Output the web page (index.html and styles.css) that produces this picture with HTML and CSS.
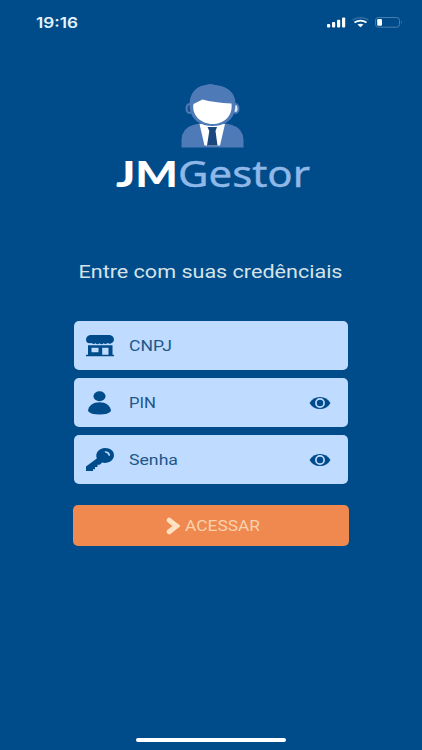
FILE: index.html
```html
<!DOCTYPE html>
<html lang="pt-BR">
<head>
<meta charset="utf-8">
<meta name="viewport" content="width=device-width, initial-scale=1">
<title>JMGestor</title>
<link rel="stylesheet" href="styles.css">
</head>
<body>
<div class="screen">
  <header class="status">
    <svg class="clock" width="44" height="16"><text x="0" y="12.500" textLength="42" lengthAdjust="spacingAndGlyphs">19:16</text></svg>
    <svg class="indicators" width="78" height="16" viewBox="0 0 78 16">
      <g fill="#fff">
        <rect x="1" y="9" width="3.200" height="3.500" rx="1"/>
        <rect x="6" y="7" width="3.200" height="5.500" rx="1"/>
        <rect x="11" y="4.800" width="3.200" height="7.700" rx="1"/>
        <rect x="16" y="2.400" width="3.200" height="10.100" rx="1"/>
        <path d="M31.500 9.600Q34.500 7.700 37.500 9.600L34.500 12.200Z"/>
      </g>
      <path d="M28.500 7.500Q34.500 3.800 40.500 7.500" fill="none" stroke="#fff" stroke-width="1.800"/>
      <path d="M26.600 5Q34.500 .6 42.400 5" fill="none" stroke="#2d6ca2" stroke-width="1.500"/>
      <rect x="49.500" y="2.500" width="24" height="9.700" rx="2.800" fill="none" stroke="#477eae"/>
      <path d="M75 5.500q1.800 1.800 0 3.600z" fill="#477eae"/>
      <rect x="51.200" y="4" width="4.800" height="6.800" rx="1.200" fill="#fff"/>
    </svg>
  </header>

  <div class="brand">
    <svg width="64" height="66" viewBox="0 0 64 66">
      <path d="M.5 64.500V57Q1 45 12 42L20 40H43L51 42Q62 45 62.500 57V64.500Z" fill="#4e7bb8"/>
      <path d="M18.500 41H44L39 62.500H23.500Z" fill="#fff"/>
      <path d="M26.500 44H36L34.500 48L36.500 62.500H26L28.300 48Z" fill="#1b477f"/>
      <ellipse cx="8.500" cy="25.500" rx="3" ry="4.600" fill="#174f8c" stroke="#4e7bb8" stroke-width="2"/>
      <ellipse cx="54.500" cy="25.500" rx="3" ry="4.600" fill="#d9e8fa" stroke="#4e7bb8" stroke-width="2"/>
      <path d="M9 26C7 11 15 3 25 2Q29 0 34 2C47 3 57 11 54 26C53 37 43 43 31.500 43S10 37 9 26Z" fill="#4e7bb8"/>
      <path d="M12.500 21L21.500 16.500C29 18.500 39 20 50.500 20.500C52 33 43 41 31.500 41C20 41 10.500 32 12.500 21Z" fill="#fff"/>
    </svg>
    <svg class="wordmark" width="196" height="36">
      <text class="jm" x="1" y="29" textLength="62" lengthAdjust="spacingAndGlyphs">JM</text>
      <text class="gestor" x="63" y="29" textLength="132" lengthAdjust="spacingAndGlyphs">Gestor</text>
    </svg>
  </div>

  <svg class="prompt" width="266" height="24"><text x="0.500" y="18" textLength="264" lengthAdjust="spacingAndGlyphs">Entre com suas credênciais</text></svg>

  <main class="form">
    <div class="field">
      <svg class="icon" width="30" height="28" viewBox="0 0 30 28">
        <path d="M5 3H25Q29 4 29 8Q28.500 11 26 11.500Q24 12 22.500 11Q20.500 13 18.500 11.300Q16.500 13 14.500 11.300Q12.500 13 10.500 11.300Q8.500 13 6.500 11Q1.500 12 1 8Q1 4 5 3Z"/>
        <path fill-rule="evenodd" d="M3 13.300H27.500V22.800H29V24.200H1V22.800H3ZM6.500 15.800V20.200H13.500V15.800ZM17.200 15.800V22.800H23.500V15.800Z"/>
      </svg>
      <svg class="label" width="60" height="22"><text x="0" y="16" textLength="43" lengthAdjust="spacingAndGlyphs">CNPJ</text></svg>
    </div>
    <div class="field">
      <svg class="icon" width="30" height="28" viewBox="0 0 30 28">
        <ellipse cx="14.500" cy="7.200" rx="6" ry="5"/>
        <path d="M3 22C3.500 16.500 8.500 13.300 14.500 13.300S25.500 16.500 26 22Q23.500 25.500 14.500 25.500T3 22Z"/>
      </svg>
      <svg class="label" width="60" height="22"><text x="0" y="16" textLength="27" lengthAdjust="spacingAndGlyphs">PIN</text></svg>
      <svg class="eye" width="22" height="14" viewBox="0 0 22 14"><path d="M.5 7Q4 1 11 1T21.500 7Q18 13 11 13T.5 7Z"/><circle cx="11" cy="7" r="4.100" fill="none" stroke="#bfdbff" stroke-width="1.700"/></svg>
    </div>
    <div class="field">
      <svg class="icon" width="30" height="28" viewBox="0 0 30 28">
        <path fill-rule="evenodd" d="M20 2C25.500 2 29 5 29 9.300S25 17 19.500 17L17.200 16.600L14.800 18.800H12.500V21H10V23.200H8V25H1V20.600L11.800 12.500C9.800 7.200 14 2 20 2ZM20 5.300Q19 5.800 20.200 6.400Q23 7 23.600 9.500Q24.500 10.500 25 9.300Q24.700 5.500 20 5.300Z"/>
      </svg>
      <svg class="label" width="60" height="22"><text x="0" y="16" textLength="49" lengthAdjust="spacingAndGlyphs">Senha</text></svg>
      <svg class="eye" width="22" height="14" viewBox="0 0 22 14"><path d="M.5 7Q4 1 11 1T21.500 7Q18 13 11 13T.5 7Z"/><circle cx="11" cy="7" r="4.100" fill="none" stroke="#bfdbff" stroke-width="1.700"/></svg>
    </div>
    <button class="submit" type="button">
      <svg width="14" height="18" viewBox="0 0 14 18"><path d="M3.200 3.200L10.500 9L3.200 14.800" fill="none" stroke="#ffe2c2" stroke-width="5" stroke-linecap="round"/></svg>
      <svg class="submit-text" width="76" height="20"><text x="0" y="15" textLength="75" lengthAdjust="spacingAndGlyphs">ACESSAR</text></svg>
    </button>
  </main>
  <div class="home-bar"></div>
</div>
</body>
</html>
```
FILE: styles.css
```css
* { box-sizing: border-box; }
body { margin: 0; background: #004c8a; }
svg { display: block; flex: none; }
text { font-family: Roboto, "Liberation Sans", sans-serif; }

.screen {
  width: 422px;
  height: 750px;
  background: #004c8a;
  display: flex;
  flex-direction: column;
  align-items: center;
  overflow: hidden;
}
.status {
  width: 100%;
  height: 83px;
  padding: 15px 18px 0 36px;
  display: flex;
  justify-content: space-between;
}
.clock text { font: 600 14.5px Inter, sans-serif; fill: #e4f3fb; }
.brand {
  display: flex;
  flex-direction: column;
  align-items: center;
  height: 176px;
  padding-left: 3px;
}
.wordmark { margin-top: 9px; overflow: visible; }
.jm { font: 900 36px Lato, sans-serif; fill: #fff; }
.gestor { font: 400 36px "Noto Sans", sans-serif; fill: #8fb8e8; stroke: #8fb8e8; stroke-width: .4px; }
.prompt { margin-top: 1px; overflow: visible; }
.prompt text { font-size: 18px; fill: #d5e3e8; }

.form {
  width: 276px;
  margin-top: 37px;
  display: flex;
  flex-direction: column;
  align-items: center;
  gap: 8px;
}
.field {
  width: 274px;
  height: 49px;
  padding: 0 17px 0 11px;
  border-radius: 5px;
  background: #bfdbff;
  display: flex;
  align-items: center;
  fill: #004c8a;
}
.label { margin-left: 14px; }
.label text { font-size: 15px; fill: #205789; }
.eye { margin-left: auto; }
.submit {
  width: 276px;
  height: 41px;
  margin-top: 13px;
  padding: 0 0 0 4px;
  border: 0;
  border-radius: 5px;
  background: #ef894f;
  display: flex;
  align-items: center;
  justify-content: center;
  gap: 5px;
}
.submit text { font-size: 15px; fill: #f9d2ad; }
.home-bar {
  width: 150px;
  height: 4px;
  margin-top: auto;
  margin-bottom: 8px;
  border-radius: 2px;
  background: #fff;
}
```
